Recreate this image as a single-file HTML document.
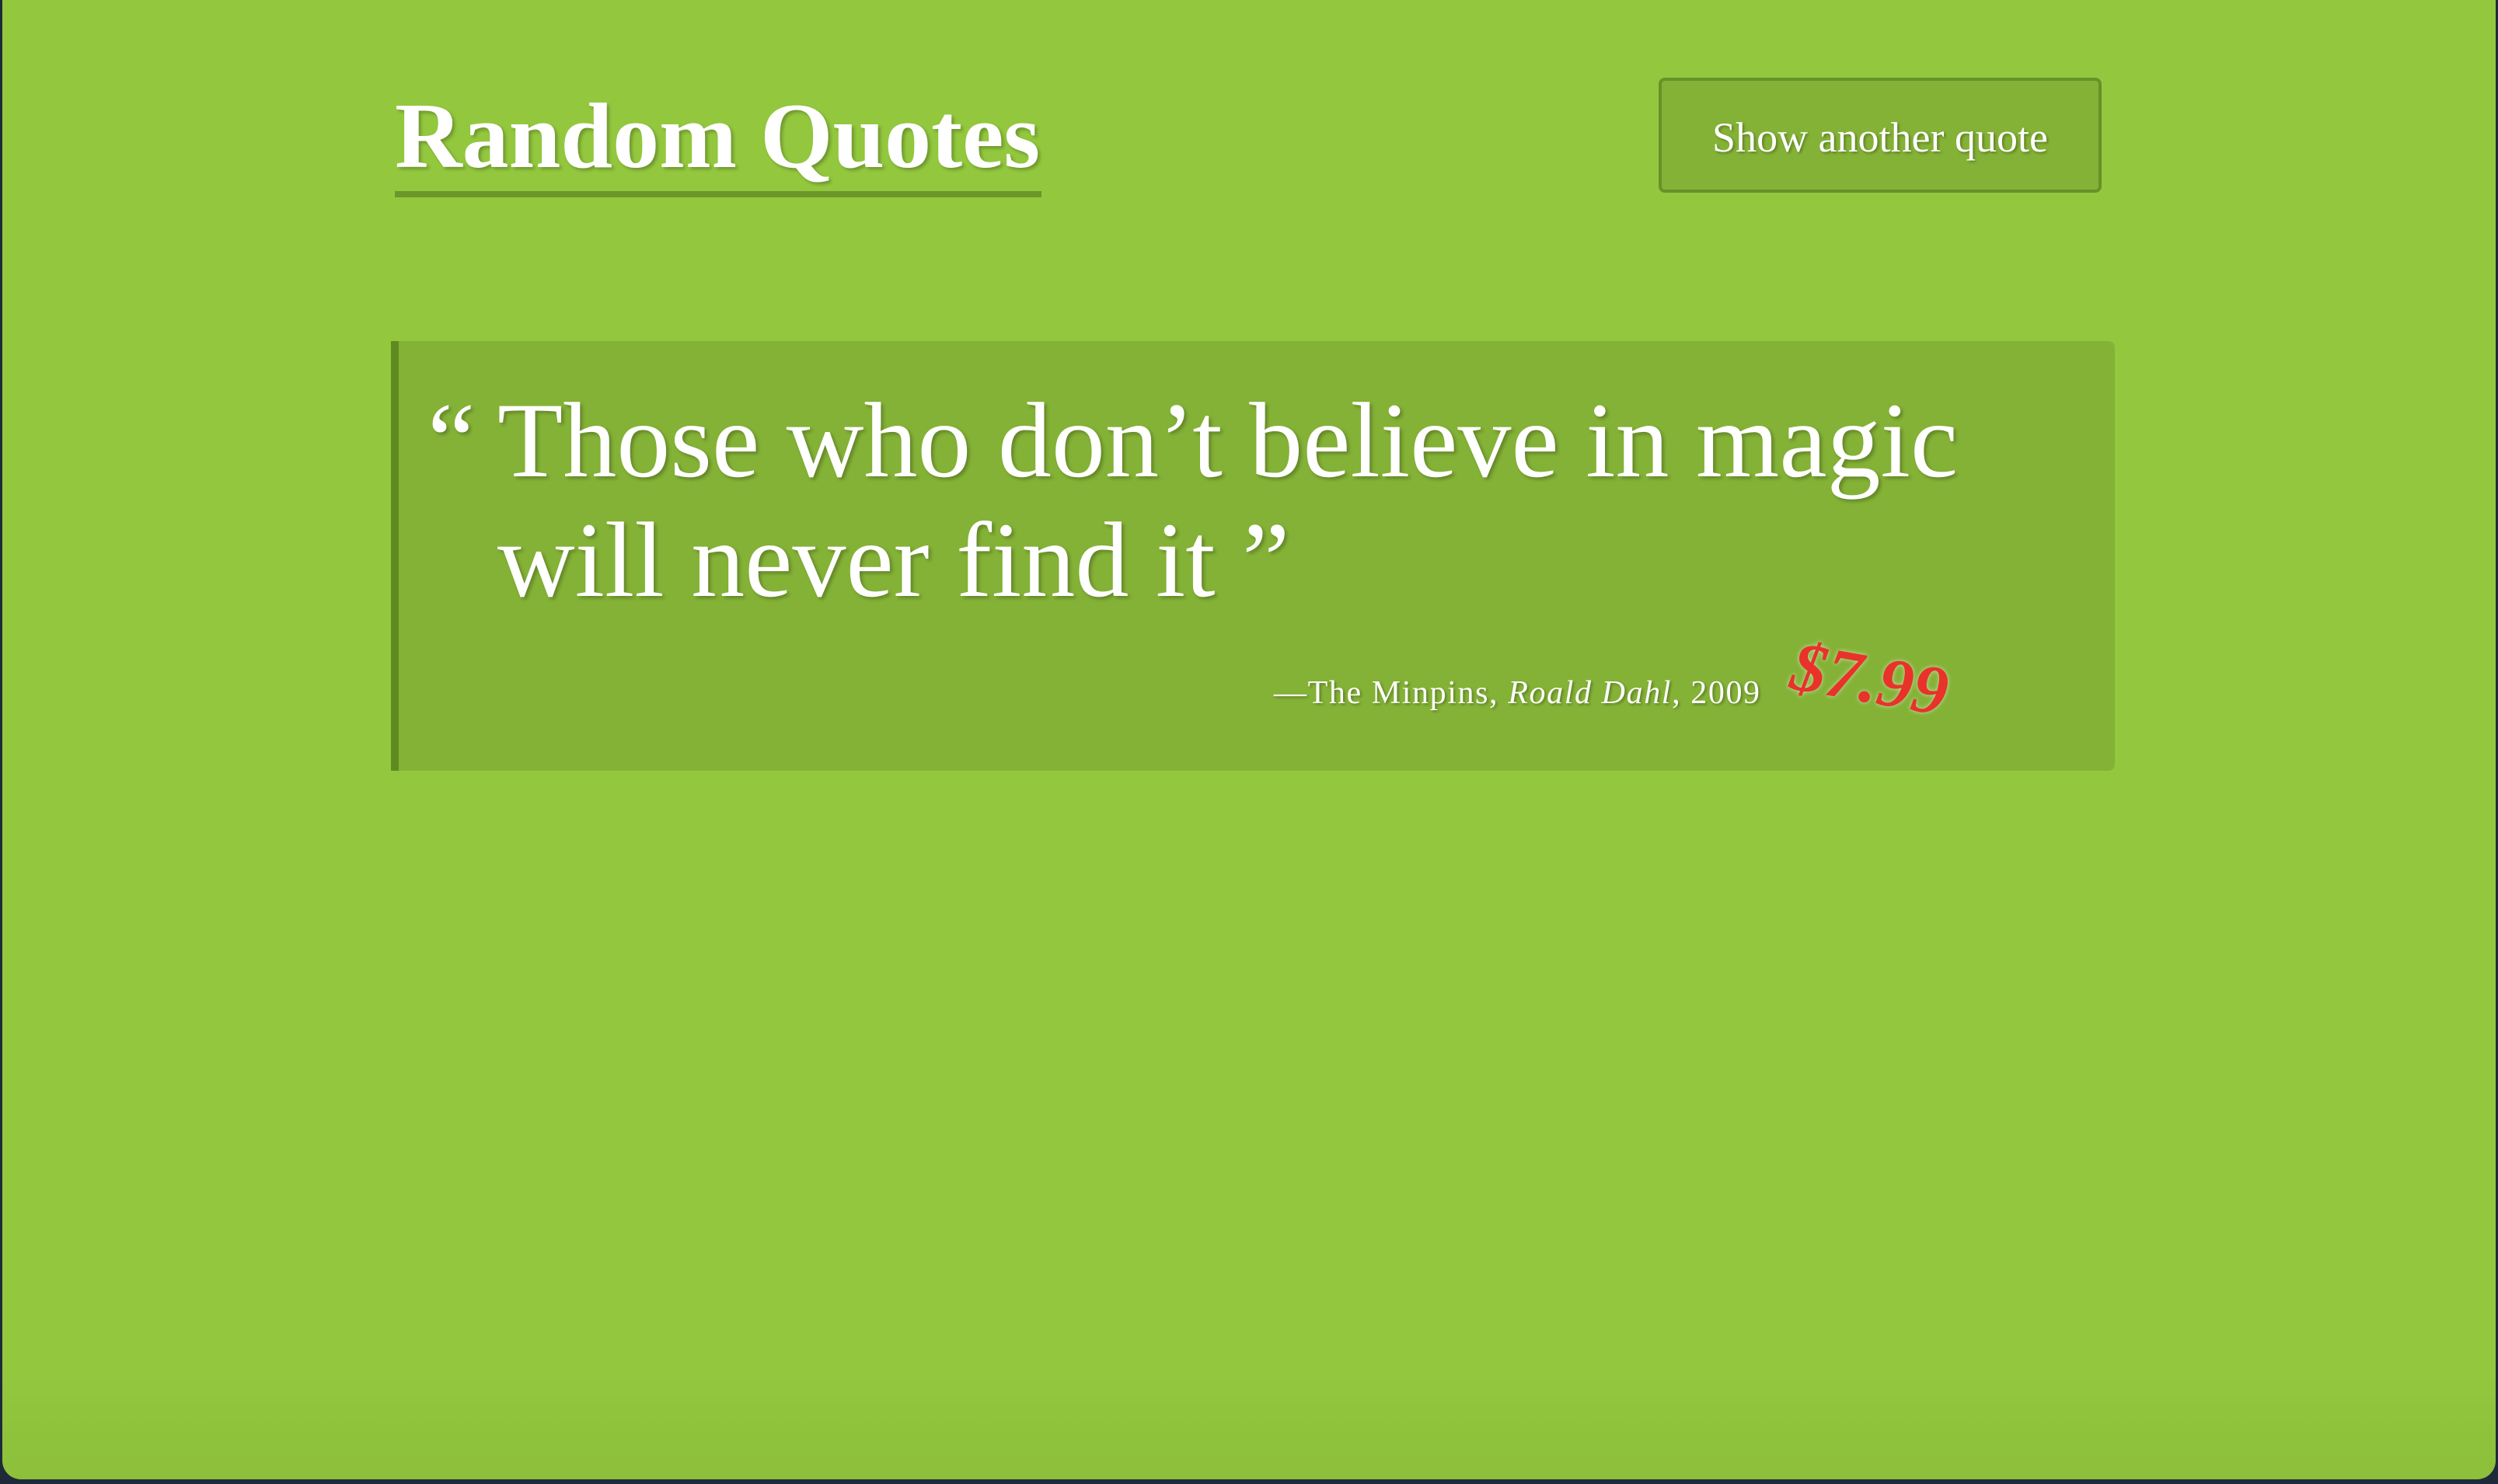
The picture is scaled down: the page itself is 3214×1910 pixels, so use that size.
<!DOCTYPE html>
<html><head><meta charset="utf-8"><style>
html,body{margin:0;padding:0;}
body{width:3214px;height:1910px;background:#1e2a3a;position:relative;overflow:hidden;font-family:"Liberation Serif",serif;}
.page{position:absolute;left:3px;top:0;width:3208px;height:1904px;background:linear-gradient(#93c83e,#93c83e 92%,#8dbf3b);border-radius:0 0 24px 24px;}
.title{position:absolute;left:505px;top:115px;font-size:120px;font-weight:bold;color:#fff;text-shadow:3px 3px 4px rgba(0,0,0,0.25);line-height:1;white-space:nowrap;}
.uline{position:absolute;left:505px;top:246px;width:832px;height:8px;background:#6b9629;}
.btn{position:absolute;left:2131px;top:100px;width:570px;height:148px;box-sizing:border-box;border:4px solid #67912a;border-radius:8px;background:#84b236;color:#fff;font-size:54px;line-height:146px;text-align:center;text-shadow:2px 2px 3px rgba(0,0,0,0.3);}
.box{position:absolute;left:500px;top:439px;width:2218px;height:553px;background:#84b236;border-left:10px solid #5f8a22;box-sizing:border-box;border-radius:0 8px 8px 0;}
.q{position:absolute;color:#fff;font-size:138px;line-height:154px;text-shadow:3px 3px 4px rgba(0,0,0,0.25);white-space:nowrap;}
.attr{position:absolute;left:1636px;top:868px;color:#fff;font-size:42px;letter-spacing:1.6px;text-shadow:2px 2px 3px rgba(0,0,0,0.3);white-space:nowrap;}
.price{position:absolute;left:2312px;top:806px;color:#e8322a;font-size:90px;font-weight:bold;font-style:italic;transform:rotate(10deg);transform-origin:left top;text-shadow:0 0 6px rgba(255,255,255,0.6);white-space:nowrap;}
</style></head><body>
<div class="page">
<div class="title">Random Quotes</div>
<div class="uline"></div>
<div class="btn">Show another quote</div>
<div class="box"></div>
<div class="q" style="left:547px;top:490px;">“</div>
<div class="q" style="left:637px;top:490px;">Those who don’t believe in magic</div>
<div class="q" style="left:637px;top:644px;">will never find it ”</div>
<div class="attr">—The Minpins, <i>Roald Dahl</i>, 2009</div>
<div class="price">$7.99</div>
</div>
</body></html>
